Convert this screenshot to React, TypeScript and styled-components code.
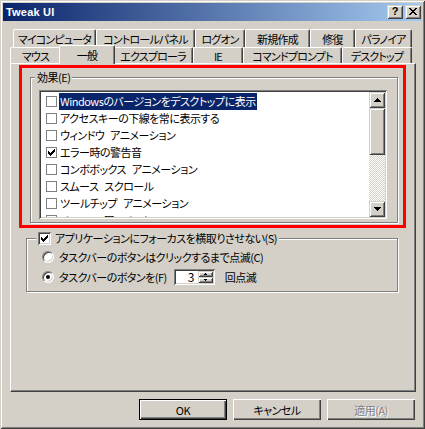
import React from 'react';
import styled, { createGlobalStyle, css } from 'styled-components';

const FACE = '#d4d0c8';
const SHADOW = '#808080';
const DARK = '#404040';
const LIGHT = '#ffffff';
const SELECTED = '#0a246a';
const UI_FONT = `"Noto Sans CJK JP", "Liberation Sans", sans-serif`;

const GlobalStyle = createGlobalStyle`
  html, body {
    margin: 0;
    padding: 0;
    background: ${FACE};
  }
  * {
    box-sizing: border-box;
  }
`;

// classic 3D edges
const raisedButton = css`
  box-shadow: inset 1px 1px ${LIGHT}, inset -1px -1px ${DARK}, inset -2px -2px ${SHADOW};
`;

const raisedFrame = css`
  box-shadow: inset 1px 1px ${FACE}, inset -1px -1px ${DARK}, inset 2px 2px ${LIGHT},
    inset -2px -2px ${SHADOW};
`;

const sunken = css`
  box-shadow: inset 1px 1px ${SHADOW}, inset -1px -1px ${LIGHT}, inset 2px 2px ${DARK},
    inset -2px -2px ${FACE};
`;

const Window = styled.div`
  width: 425px;
  height: 429px;
  padding: 3px;
  background: ${FACE};
  ${raisedFrame};
  display: flex;
  flex-direction: column;
  font-family: ${UI_FONT};
  font-size: 11px;
  letter-spacing: -0.5px;
  word-spacing: 4px;
  font-feature-settings: 'palt';
  color: #000;
`;

const TitleBar = styled.div`
  height: 18px;
  display: flex;
  align-items: center;
  padding: 0 1px 0 3px;
  background: linear-gradient(to right, #0a246a, #a6caf0);
  color: #fff;
`;

const Caption = styled.span`
  flex: 1;
  font-family: 'Liberation Sans', Arial, sans-serif;
  font-weight: bold;
  font-size: 11px;
  letter-spacing: 0.2px;
  word-spacing: 0;
`;

const CaptionButton = styled.div<{ $gap?: boolean }>`
  width: 16px;
  height: 14px;
  margin-left: ${(p) => (p.$gap ? '2px' : '0')};
  background: ${FACE};
  ${raisedFrame};
  display: flex;
  align-items: center;
  justify-content: center;
  color: #000;
  font-family: 'Liberation Sans', Arial, sans-serif;
  font-weight: bold;
  font-size: 11px;
  letter-spacing: 0;
  line-height: 1;
  padding-bottom: 1px;
`;

const TabStrip = styled.div`
  margin-top: 8px;
  display: flex;
  flex-direction: column;
`;

const TabRow = styled.div<{ $indent: number; $height: number }>`
  display: flex;
  height: ${(p) => p.$height}px;
  padding-left: ${(p) => p.$indent}px;
`;

const Tab = styled.div<{ $width: number; $active?: boolean }>`
  width: ${(p) => p.$width}px;
  flex: none;
  display: flex;
  align-items: center;
  justify-content: center;
  background: ${FACE};
  border-top: 1px solid ${LIGHT};
  border-left: 1px solid ${LIGHT};
  border-right: 1px solid ${DARK};
  border-radius: 2px 2px 0 0;
  box-shadow: inset -1px 0 ${SHADOW};
  white-space: nowrap;
  letter-spacing: -0.8px;
  padding-top: 1px;
  ${(p) =>
    p.$active &&
    css`
      width: ${p.$width + 4}px;
      margin: -2px -2px -1px;
      position: relative;
      z-index: 2;
      padding-bottom: 2px;
    `}
`;

const Panel = styled.div`
  margin-left: 7px;
  width: 406px;
  height: 329px;
  border-top: 1px solid ${LIGHT};
  border-left: 1px solid ${LIGHT};
  border-right: 1px solid ${DARK};
  border-bottom: 1px solid ${DARK};
  box-shadow: inset -1px -1px ${SHADOW};
  display: flex;
  flex-direction: column;
  align-items: flex-start;
`;

const Highlight = styled.div`
  margin: 1px 0 0 8px;
  width: 387px;
  height: 163px;
  border: 3px solid #ff0000;
  padding: 9px 0 0 8px;
`;

const GroupBox = styled.div<{ $width: number; $height: number }>`
  position: relative;
  width: ${(p) => p.$width}px;
  height: ${(p) => p.$height}px;
  border: 1px solid ${SHADOW};
  box-shadow: inset 1px 1px ${LIGHT}, 1px 1px ${LIGHT};
`;

const LowerGroup = styled.div`
  margin: 10px 0 0 15px;
`;

const Legend = styled.div<{ $left: number }>`
  position: absolute;
  top: -7px;
  left: ${(p) => p.$left}px;
  height: 13px;
  padding: 0 2px;
  background: ${FACE};
  line-height: 13px;
  display: flex;
  align-items: center;
  gap: 4px;
  white-space: nowrap;
`;

const ListBox = styled.div`
  margin: 12px 0 0 8px;
  width: 348px;
  height: 129px;
  padding: 2px;
  background: #fff;
  ${sunken};
  display: flex;
`;

const Items = styled.div`
  flex: 1;
  overflow: hidden;
  padding-top: 1px;
`;

const Item = styled.div`
  height: 17px;
  display: flex;
  align-items: center;
  padding-left: 5px;
  gap: 2px;
  white-space: nowrap;
`;

const ItemBox = styled.span`
  width: 11px;
  height: 11px;
  flex: none;
  border: 1px solid ${SHADOW};
  background: #fff;
  display: flex;
  align-items: center;
  justify-content: center;
`;

const ItemLabel = styled.span<{ $selected?: boolean }>`
  padding: 0 1px;
  line-height: 17px;
  background: ${(p) => (p.$selected ? SELECTED : 'transparent')};
  color: ${(p) => (p.$selected ? '#fff' : '#000')};
`;

const ScrollBar = styled.div`
  width: 16px;
  flex: none;
  display: flex;
  flex-direction: column;
`;

const ScrollButton = styled.div<{ $height: number }>`
  height: ${(p) => p.$height}px;
  flex: none;
  background: ${FACE};
  ${raisedFrame};
  display: flex;
  align-items: center;
  justify-content: center;
`;

const ScrollTrack = styled.div`
  flex: 1;
  background-color: #fff;
  background-image: repeating-conic-gradient(${FACE} 0% 25%, #fff 0% 50%);
  background-size: 2px 2px;
`;

const Options = styled.div`
  padding: 10px 0 0 15px;
  display: flex;
  flex-direction: column;
  gap: 4px;
`;

const OptionRow = styled.div`
  height: 16px;
  display: flex;
  align-items: center;
  white-space: nowrap;
`;

const CheckBox = styled.span`
  width: 13px;
  height: 13px;
  flex: none;
  background: #fff;
  ${sunken};
  display: flex;
  align-items: center;
  justify-content: center;
`;

const Radio = styled.span<{ $on?: boolean }>`
  width: 12px;
  height: 12px;
  flex: none;
  margin-right: 5px;
  border-radius: 50%;
  border: 1px solid;
  border-color: ${SHADOW} ${LIGHT} ${LIGHT} ${SHADOW};
  background: #fff;
  box-shadow: inset 1px 1px ${DARK}, inset -1px -1px ${FACE};
  display: flex;
  align-items: center;
  justify-content: center;
  &::after {
    content: '';
    width: 4px;
    height: 4px;
    border-radius: 50%;
    background: ${(p) => (p.$on ? '#000' : 'transparent')};
  }
`;

const SpinEdit = styled.div`
  margin-left: 7px;
  width: 41px;
  height: 16px;
  padding: 2px;
  background: #fff;
  ${sunken};
  display: flex;
`;

const SpinValue = styled.span`
  flex: 1;
  text-align: right;
  padding-right: 4px;
  line-height: 12px;
  font-size: 12px;
`;

const SpinButtons = styled.div`
  width: 15px;
  display: flex;
  flex-direction: column;
`;

const SpinButton = styled.div`
  flex: 1;
  background: ${FACE};
  ${raisedFrame};
  display: flex;
  align-items: center;
  justify-content: center;
`;

const Suffix = styled.span`
  margin-left: 10px;
`;

const ButtonBar = styled.div`
  margin-top: 7px;
  padding-right: 7px;
  display: flex;
  justify-content: flex-end;
  gap: 6px;
`;

const PushButton = styled.div<{ $default?: boolean; $disabled?: boolean }>`
  width: 88px;
  height: 21px;
  background: ${FACE};
  display: flex;
  align-items: center;
  justify-content: center;
  color: ${(p) => (p.$disabled ? SHADOW : '#000')};
  text-shadow: ${(p) => (p.$disabled ? `1px 1px ${LIGHT}` : 'none')};
  ${raisedButton};
  ${(p) =>
    p.$default &&
    css`
      border: 1px solid #000;
    `}
`;

// pixel triangle used by scroll and spin arrows
const Arrow: React.FC<{ dir: 'up' | 'down'; size?: number }> = ({ dir, size = 4 }) => {
  const w = size * 2 - 1;
  const rows = Array.from({ length: size }, (_, i) => {
    const half = dir === 'up' ? i : size - 1 - i;
    return <rect key={i} x={size - 1 - half} y={i} width={half * 2 + 1} height={1} />;
  });
  return (
    <svg width={w} height={size} viewBox={`0 0 ${w} ${size}`} shapeRendering="crispEdges" fill="#000">
      {rows}
    </svg>
  );
};

const Check: React.FC = () => (
  <svg width="7" height="7" viewBox="0 0 7 7" shapeRendering="crispEdges" fill="#000">
    <rect x="6" y="0" width="1" height="3" />
    <rect x="5" y="1" width="1" height="3" />
    <rect x="4" y="2" width="1" height="3" />
    <rect x="3" y="3" width="1" height="3" />
    <rect x="2" y="4" width="1" height="3" />
    <rect x="1" y="3" width="1" height="3" />
    <rect x="0" y="2" width="1" height="3" />
  </svg>
);

const CloseGlyph: React.FC = () => (
  <svg width="8" height="7" viewBox="0 0 8 7" shapeRendering="crispEdges" fill="#000">
    {[0, 1, 2, 3, 4, 5, 6].map((i) => (
      <React.Fragment key={i}>
        <rect x={i} y={i} width="2" height="1" />
        <rect x={6 - i} y={i} width="2" height="1" />
      </React.Fragment>
    ))}
  </svg>
);

const backTabs = [
  { label: 'マイコンピュータ', width: 83 },
  { label: 'コントロールパネル', width: 99 },
  { label: 'ログオン', width: 50 },
  { label: '新規作成', width: 65 },
  { label: '修復', width: 45 },
  { label: 'パラノイア', width: 57 },
];

const frontTabs = [
  { label: 'マウス', width: 51 },
  { label: '一般', width: 52, active: true },
  { label: 'エクスプローラ', width: 80 },
  { label: 'IE', width: 50 },
  { label: 'コマンドプロンプト', width: 99 },
  { label: 'デスクトップ', width: 70 },
];

const effects = [
  { label: 'Windowsのバージョンをデスクトップに表示', selected: true },
  { label: 'アクセスキーの下線を常に表示する' },
  { label: 'ウィンドウ アニメーション' },
  { label: 'エラー時の警告音', checked: true },
  { label: 'コンボボックス アニメーション' },
  { label: 'スムース スクロール' },
  { label: 'ツールチップ アニメーション' },
  { label: 'メニュー アニメーション' },
];

const App: React.FC = () => {
  return (
    <>
      <GlobalStyle />
      <Window>
        <TitleBar>
          <Caption>Tweak UI</Caption>
          <CaptionButton>?</CaptionButton>
          <CaptionButton $gap>
            <CloseGlyph />
          </CaptionButton>
        </TitleBar>

        <TabStrip>
          <TabRow $indent={10} $height={18}>
            {backTabs.map((t) => (
              <Tab key={t.label} $width={t.width}>
                {t.label}
              </Tab>
            ))}
          </TabRow>
          <TabRow $indent={7} $height={16}>
            {frontTabs.map((t) => (
              <Tab key={t.label} $width={t.width} $active={t.active}>
                {t.label}
              </Tab>
            ))}
          </TabRow>
        </TabStrip>

        <Panel>
          <Highlight>
            <GroupBox $width={368} $height={146}>
              <Legend $left={4}>効果(E)</Legend>
              <ListBox>
                <Items>
                  {effects.map((e) => (
                    <Item key={e.label}>
                      <ItemBox>{e.checked && <Check />}</ItemBox>
                      <ItemLabel $selected={e.selected}>{e.label}</ItemLabel>
                    </Item>
                  ))}
                </Items>
                <ScrollBar>
                  <ScrollButton $height={16}>
                    <Arrow dir="up" />
                  </ScrollButton>
                  <ScrollButton $height={47} />
                  <ScrollTrack />
                  <ScrollButton $height={16}>
                    <Arrow dir="down" />
                  </ScrollButton>
                </ScrollBar>
              </ListBox>
            </GroupBox>
          </Highlight>

          <LowerGroup>
            <GroupBox $width={372} $height={54}>
              <Legend $left={9}>
                <CheckBox>
                  <Check />
                </CheckBox>
                アプリケーションにフォーカスを横取りさせない(S)
              </Legend>
              <Options>
                <OptionRow>
                  <Radio />
                  タスクバーのボタンはクリックするまで点滅(C)
                </OptionRow>
                <OptionRow>
                  <Radio $on />
                  タスクバーのボタンを(F)
                  <SpinEdit>
                    <SpinValue>3</SpinValue>
                    <SpinButtons>
                      <SpinButton>
                        <Arrow dir="up" size={2} />
                      </SpinButton>
                      <SpinButton>
                        <Arrow dir="down" size={2} />
                      </SpinButton>
                    </SpinButtons>
                  </SpinEdit>
                  <Suffix>回点滅</Suffix>
                </OptionRow>
              </Options>
            </GroupBox>
          </LowerGroup>
        </Panel>

        <ButtonBar>
          <PushButton $default>OK</PushButton>
          <PushButton>キャンセル</PushButton>
          <PushButton $disabled>適用(A)</PushButton>
        </ButtonBar>
      </Window>
    </>
  );
};

export default App;
